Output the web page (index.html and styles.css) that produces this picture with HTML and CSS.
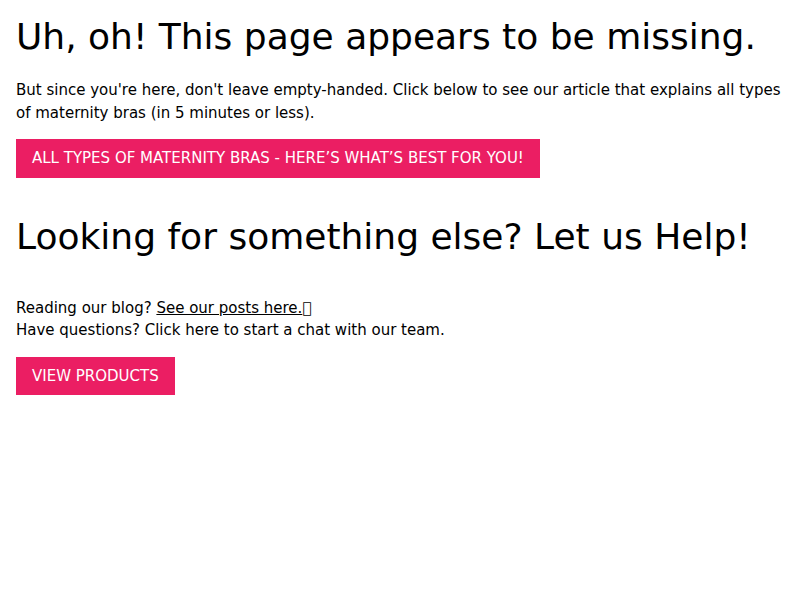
FILE: index.html
```html
<!DOCTYPE html>
<html lang="en">
<head>
<meta charset="utf-8">
<title>Page not found</title>
<link rel="stylesheet" href="styles.css">
</head>
<body>
<main class="page">
  <section class="block">
    <h1 class="title">Uh, oh! This page appears to be missing.</h1>
    <p class="lead">But since you're here, don't leave empty-handed. Click below to see our article that explains all types of maternity bras (in 5 minutes or less).</p>
    <a class="btn" href="#">ALL TYPES OF MATERNITY BRAS - HERE’S WHAT’S BEST FOR YOU!</a>
  </section>
  <section class="block help">
    <h2 class="title">Looking for something else? Let us Help!</h2>
    <p class="links">Reading our blog? <a class="link" href="#">See our posts here.</a><span class="icon">&#xf105;</span><br>Have questions? Click here to start a chat with our team.</p>
    <a class="btn btn-small" href="#">VIEW PRODUCTS</a>
  </section>
</main>
</body>
</html>
```

FILE: styles.css
```css
html, body {
  margin: 0;
  padding: 0;
  background: #fff;
}
body {
  font-family: "DejaVu Sans", sans-serif;
  color: #000;
  font-size: 15px;
}
.page {
  padding: 16px;
}
.title {
  font-size: 36px;
  font-weight: normal;
  margin: 0;
  line-height: 42px;
}
.lead {
  margin: 21px 0 14px;
  line-height: 23px;
}
.btn {
  display: inline-block;
  background: #eb1e63;
  color: #fff;
  text-decoration: none;
  padding: 0 16px;
  line-height: 39px;
}
.btn-small {
  line-height: 38px;
}
.help {
  margin-top: 38px;
}
.links {
  margin: 39px 0 16px;
  line-height: 22px;
}
.link {
  color: #000;
}
```
